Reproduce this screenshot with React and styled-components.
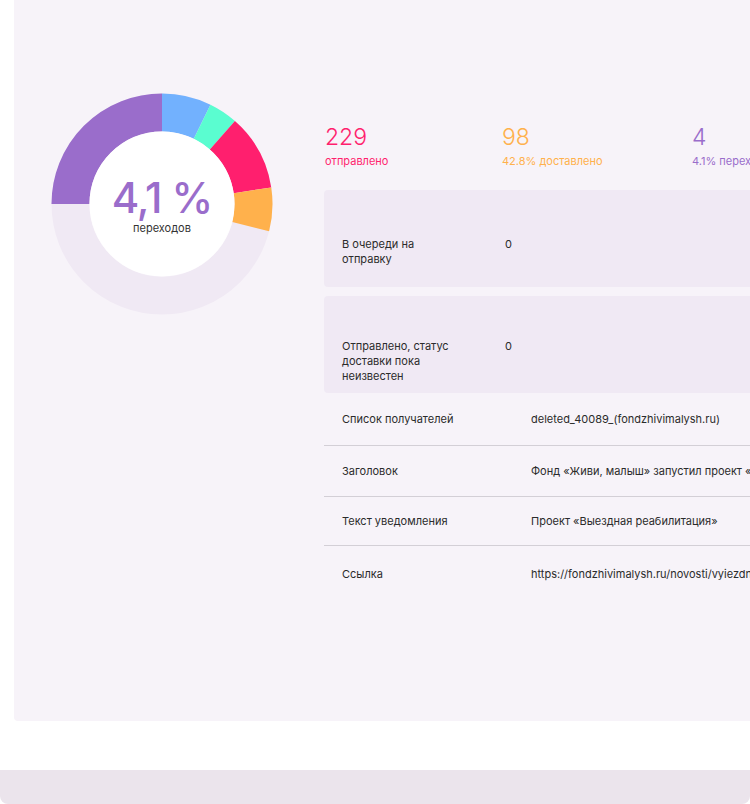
import React from "react";
import styled, { createGlobalStyle } from "styled-components";

const colors = {
  purple: "#9a6dcb",
  blue: "#72b1fe",
  teal: "#5afdd0",
  pink: "#ff1f6e",
  orange: "#ffb14c",
  track: "#f0e9f4",
  card: "#f7f3f9",
  footer: "#ebe4ec",
  text: "#2b2b2b",
  line: "#d3cfd6",
};

const GlobalStyle = createGlobalStyle`
  html, body {
    margin: 0;
    padding: 0;
    background: #ffffff;
    overflow: hidden;
  }
  body {
    font-family: Inter, "Noto Sans", sans-serif;
    color: ${colors.text};
  }
`;

const segments = [
  { from: 0, to: 26, color: colors.blue },
  { from: 26, to: 41.3, color: colors.teal },
  { from: 41.3, to: 81.4, color: colors.pink },
  { from: 81.4, to: 104.3, color: colors.orange },
  { from: 270, to: 360, color: colors.purple },
];

const stats = [
  { value: "229", label: "отправлено", color: colors.pink, width: 177 },
  { value: "98", label: "42.8% доставлено", color: colors.orange, width: 190 },
  { value: "4", label: "4.1% переходов", color: colors.purple, width: 190 },
];

const statusRows = [
  { label: "В очереди на отправку", value: "0", pad: 47 },
  { label: "Отправлено, статус доставки пока неизвестен", value: "0", pad: 43 },
];

const infoRows = [
  { label: "Список получателей", value: "deleted_40089_(fondzhivimalysh.ru)", height: 53 },
  {
    label: "Заголовок",
    value: "Фонд «Живи, малыш» запустил проект «Выездная реабилитация»",
    height: 51,
  },
  { label: "Текст уведомления", value: "Проект «Выездная реабилитация»", height: 49 },
  {
    label: "Ссылка",
    value: "https://fondzhivimalysh.ru/novosti/vyiezdnaya-reabilitatsiya",
    height: 56,
  },
];

const C = 111;
const R = 91.5;

const point = deg => {
  const a = (deg * Math.PI) / 180;
  return [C + R * Math.sin(a), C - R * Math.cos(a)];
};

const arc = (from, to) => {
  const [x1, y1] = point(from);
  const [x2, y2] = point(to);
  const large = to - from > 180 ? 1 : 0;
  return `M ${x1} ${y1} A ${R} ${R} 0 ${large} 1 ${x2} ${y2}`;
};

const Donut = () => (
  <DonutBox>
    <svg width="222" height="222" viewBox="0 0 222 222">
      <circle cx={C} cy={C} r={R} fill="none" stroke={colors.track} strokeWidth="38" />
      {segments.map(s => (
        <path
          key={s.from}
          d={arc(s.from, s.to)}
          fill="none"
          stroke={s.color}
          strokeWidth="38"
        />
      ))}
      <circle cx={C} cy={C} r="72.5" fill="#fff" />
    </svg>
    <DonutCenter>
      <Percent>4,1 %</Percent>
      <PercentLabel>переходов</PercentLabel>
    </DonutCenter>
  </DonutBox>
);

export default function App() {
  return (
    <Page>
      <GlobalStyle />
      <Card>
        <ChartColumn>
          <Donut />
        </ChartColumn>
        <Details>
          <StatsRow>
            {stats.map(s => (
              <Stat key={s.value} color={s.color} width={s.width}>
                <StatValue>{s.value}</StatValue>
                <StatLabel>{s.label}</StatLabel>
              </Stat>
            ))}
          </StatsRow>
          <StatusList>
            {statusRows.map(r => (
              <StatusRow key={r.label} pad={r.pad}>
                <StatusLabel>{r.label}</StatusLabel>
                <StatusValue>{r.value}</StatusValue>
              </StatusRow>
            ))}
          </StatusList>
          <InfoTable>
            {infoRows.map(r => (
              <InfoRow key={r.label} height={r.height}>
                <InfoLabel>{r.label}</InfoLabel>
                <InfoValue>{r.value}</InfoValue>
              </InfoRow>
            ))}
          </InfoTable>
        </Details>
      </Card>
      <Footer />
    </Page>
  );
}

const Page = styled.div`
  width: 750px;
  height: 804px;
  display: flex;
  flex-direction: column;
  overflow: hidden;
`;

const Card = styled.section`
  margin-left: 14px;
  height: 721px;
  background: ${colors.card};
  border-bottom-left-radius: 4px;
  display: flex;
  overflow: hidden;
`;

const ChartColumn = styled.div`
  flex: 0 0 310px;
  padding: 93px 0 0 37px;
  box-sizing: border-box;
`;

const DonutBox = styled.div`
  position: relative;
  width: 222px;
  height: 222px;

  svg {
    display: block;
  }
`;

const DonutCenter = styled.div`
  position: absolute;
  inset: 0;
  display: flex;
  flex-direction: column;
  align-items: center;
  justify-content: center;
  padding-top: 1px;
  box-sizing: border-box;
`;

const Percent = styled.div`
  font-size: 42px;
  line-height: 46px;
  font-weight: 500;
  color: ${colors.purple};
  letter-spacing: -1px;
`;

const PercentLabel = styled.div`
  font-size: 11px;
  line-height: 14px;
  color: #333;
`;

const Details = styled.div`
  flex: 0 0 620px;
  padding-top: 124px;
  display: flex;
  flex-direction: column;
`;

const StatsRow = styled.div`
  display: flex;
  padding-left: 1px;
`;

const Stat = styled.div`
  flex: 0 0 ${props => props.width}px;
  color: ${props => props.color};
  white-space: nowrap;
`;

const StatValue = styled.div`
  font-size: 23px;
  line-height: 26px;
  font-weight: 300;
`;

const StatLabel = styled.div`
  margin-top: 4px;
  font-size: 11px;
  line-height: 14px;
`;

const StatusList = styled.div`
  margin-top: 22px;
  display: flex;
  flex-direction: column;
  gap: 9px;
`;

const StatusRow = styled.div`
  height: 97px;
  box-sizing: border-box;
  padding: ${props => props.pad}px 0 0 18px;
  background: ${colors.track};
  border-radius: 4px;
  display: grid;
  grid-template-columns: 163px 1fr;
  align-items: start;
  font-size: 11px;
  line-height: 15px;
`;

const StatusLabel = styled.div`
  max-width: 112px;
`;

const StatusValue = styled.div``;

const InfoTable = styled.div`
  display: flex;
  flex-direction: column;
`;

const InfoRow = styled.div`
  height: ${props => props.height}px;
  box-sizing: border-box;
  padding-left: 18px;
  display: grid;
  grid-template-columns: 189px 1fr;
  align-items: center;
  font-size: 11px;
  line-height: 15px;
  white-space: nowrap;
  border-bottom: 1px solid ${colors.line};

  &:last-child {
    border-bottom: none;
  }
`;

const InfoLabel = styled.div``;

const InfoValue = styled.div`
  overflow: hidden;
`;

const Footer = styled.div`
  margin-top: 49px;
  height: 34px;
  background: ${colors.footer};
  border-radius: 0 0 8px 8px;
`;
